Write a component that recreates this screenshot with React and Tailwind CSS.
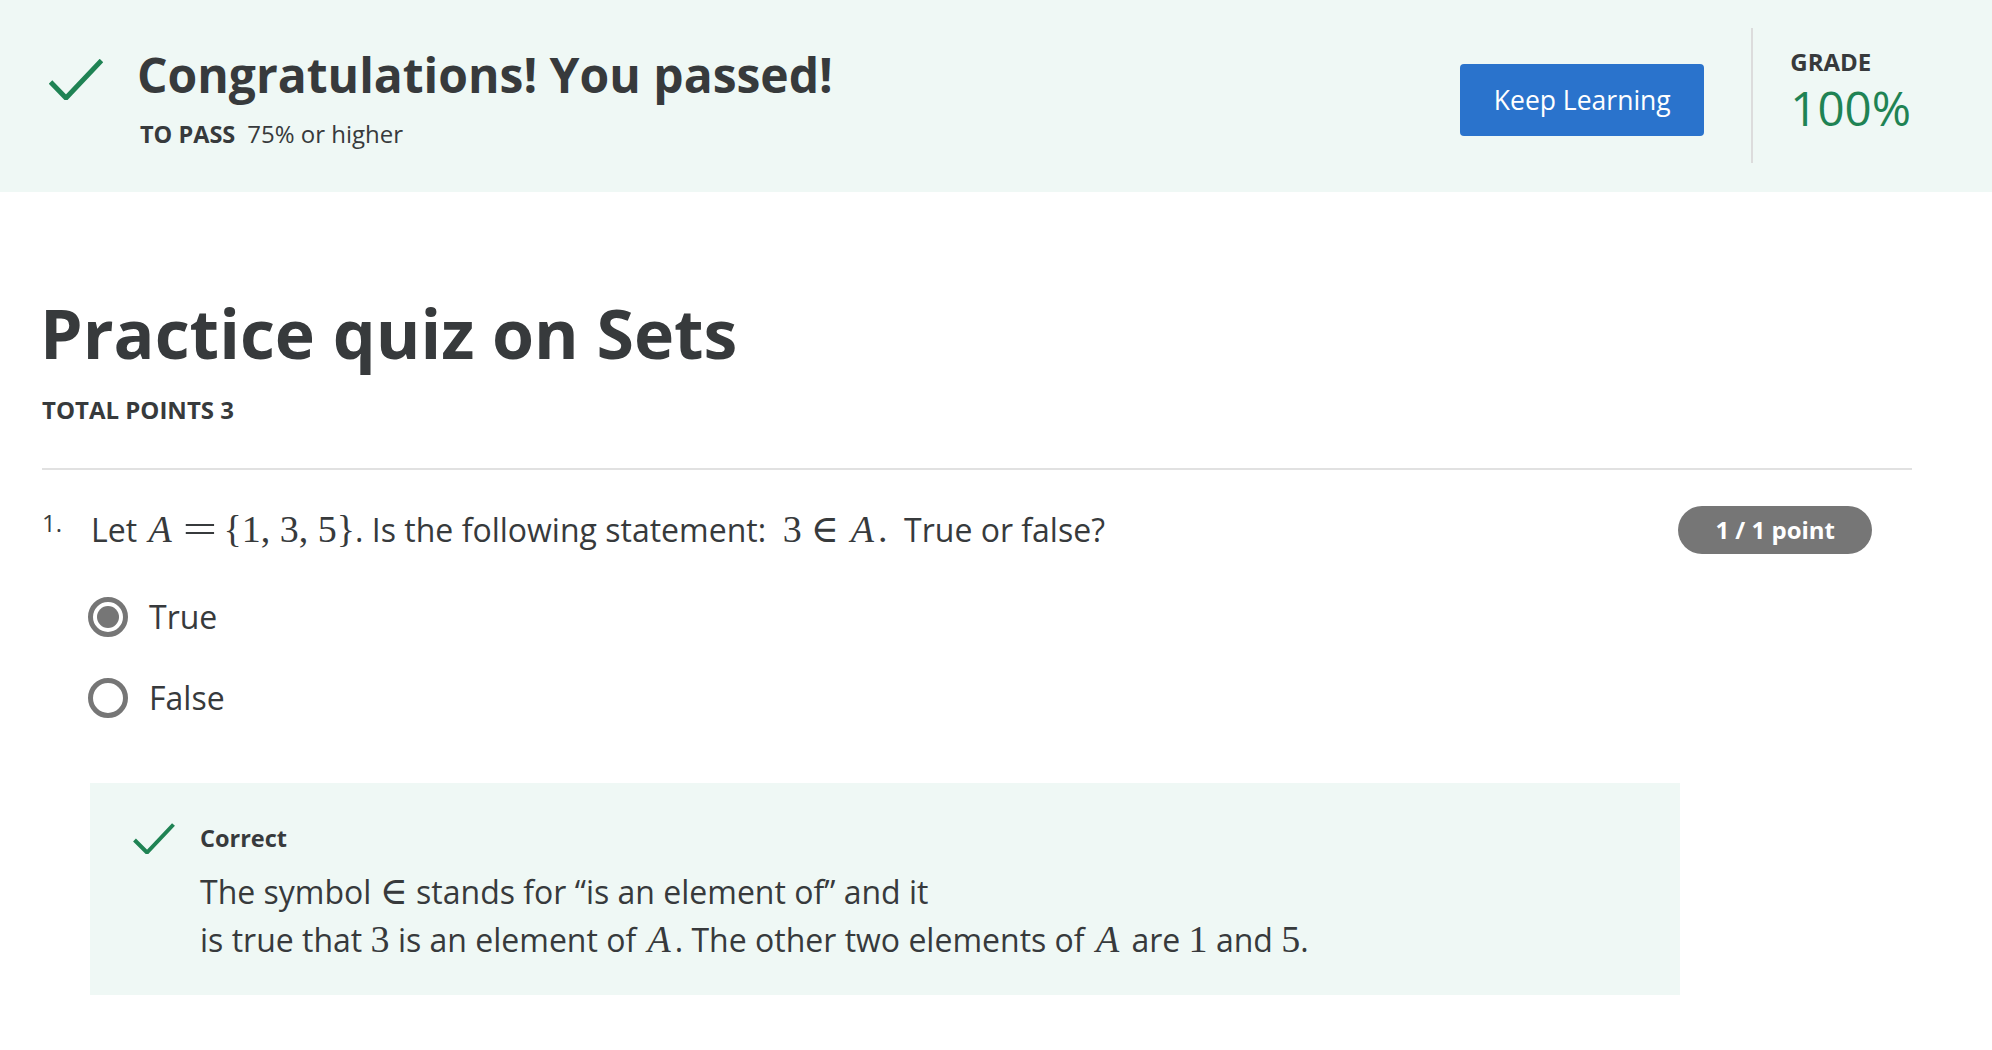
import React from "react";

const CheckMark = ({ className, w, h, d, stroke }) => (
    <svg className={className} width={w} height={h} viewBox={`0 0 ${w} ${h}`} fill="none">
        <path d={d} stroke="#1f8354" strokeWidth={stroke} strokeLinejoin="miter" />
    </svg>
);

const mathFont = { fontFamily: '"Liberation Serif", "DejaVu Serif", serif' };

// inline math pieces, roughly like KaTeX output
const M = ({ children, italic }) => (
    <span
        className={`text-[38px] leading-none ${italic ? "italic inline-block pl-[3px] pr-[4px]" : ""}`}
        style={mathFont}
    >
        {children}
    </span>
);

// relation symbol with thick spacing on both sides
const Rel = ({ children, wide }) => (
    <span
        className={`inline-block text-[38px] leading-none text-center ${wide ? "w-[30px] mx-[9px] scale-x-[1.6]" : "w-[24px] ml-[9px] mr-[13px]"}`}
        style={mathFont}
    >
        {children}
    </span>
);

const Radio = ({ checked, label }) => (
    <div className="flex items-center h-[50px]">
        <div className="w-[40px] h-[40px] rounded-full border-[5px] border-[#767676] flex items-center justify-center">
            {checked && <div className="w-[22px] h-[22px] rounded-full bg-[#767676]" />}
        </div>
        <span className="ml-[21px] text-[32px] leading-[48px] text-[#373a3c]">{label}</span>
    </div>
);

const App = () => {
    return (
        <div className="min-h-[1050px] bg-white text-[#373a3c]" style={{ fontFamily: '"Open Sans", "Liberation Sans", sans-serif' }}>
            {/* header banner */}
            <div className="h-[192px] bg-[#eff8f5] flex justify-between pl-[49px] pr-[81px]">
                <div className="flex items-start pt-[46px]">
                    <CheckMark className="mt-[13px]" w={54} h={41} d="M1.5 23 L17 39 L52.5 1.5" stroke={5} />
                    <div className="ml-[34px]">
                        <h2 className="text-[48px] leading-[58px] font-bold">Congratulations! You passed!</h2>
                        <div className="mt-[14px] leading-[32px] pl-[3px]">
                            <span className="font-bold text-[23.5px]">TO PASS</span>
                            <span className="ml-[12px] text-[24px]">75% or higher</span>
                        </div>
                    </div>
                </div>
                <div className="flex items-start pt-[28px]">
                    <button className="mt-[36px] w-[244px] h-[72px] bg-[#2a73cc] text-white text-[26.5px] rounded-[4px] pt-[1px]">
                        Keep Learning
                    </button>
                    <div className="ml-[47px] w-[2px] h-[135px] bg-[#dcdcdc]" />
                    <div className="ml-[37px] pt-[19px]">
                        <div className="text-[24px] leading-[30px] font-bold">GRADE</div>
                        <div className="mt-[2px] text-[47.5px] leading-[58px] text-[#1f8354]">100%</div>
                    </div>
                </div>
            </div>

            {/* quiz body */}
            <div className="pl-[42px] pr-[80px]">
                <h1 className="mt-[99px] text-[68px] leading-[84px] font-bold -ml-[2px]">Practice quiz on Sets</h1>
                <div className="mt-[19px] text-[24px] leading-[32px] font-bold">TOTAL POINTS 3</div>
                <div className="mt-[42px] h-[2px] bg-[#e1e1e1]" />

                <div className="mt-[36px] flex items-start justify-between pr-[40px]">
                    <div className="flex items-start">
                        <span className="w-[49px] text-[24px] leading-[34px]">1.</span>
                        <p className="text-[32px] leading-[48px]">
                            Let <M italic>A</M>
                            <Rel wide>=</Rel>
                            <M>{"{1, 3, 5}"}</M>. Is the following statement:{"\u00a0 "}
                            <M>3</M>
                            <Rel>∈</Rel>
                            <M italic>A</M>
                            <M>.</M>
                            {"\u00a0 "}True or false?
                        </p>
                    </div>
                    <div className="h-[48px] px-[37px] rounded-full bg-[#767676] text-white text-[24px] font-bold flex items-center">
                        1 / 1 point
                    </div>
                </div>

                <div className="mt-[38px] pl-[46px] flex flex-col gap-[31px]">
                    <Radio checked label="True" />
                    <Radio label="False" />
                </div>

                <div className="mt-[60px] ml-[48px] w-[1590px] bg-[#eff8f5] pl-[43px] pt-[40px] pb-[31px] flex items-start">
                    <CheckMark w={42} h={31} d="M1.5 17 L14 29.5 L40.5 1.5" stroke={4} />
                    <div className="ml-[25px]">
                        <div className="text-[23.5px] leading-[30px] font-bold">Correct</div>
                        <p className="mt-[15px] text-[32px] leading-[48px]">
                            The symbol <M>∈</M> stands for “is an element of” and it
                            <br />
                            is true that <M>3</M> is an element of <M italic>A</M>. The other two elements of <M italic>A</M> are <M>1</M> and <M>5</M>.
                        </p>
                    </div>
                </div>
            </div>
        </div>
    );
};

export default App;
